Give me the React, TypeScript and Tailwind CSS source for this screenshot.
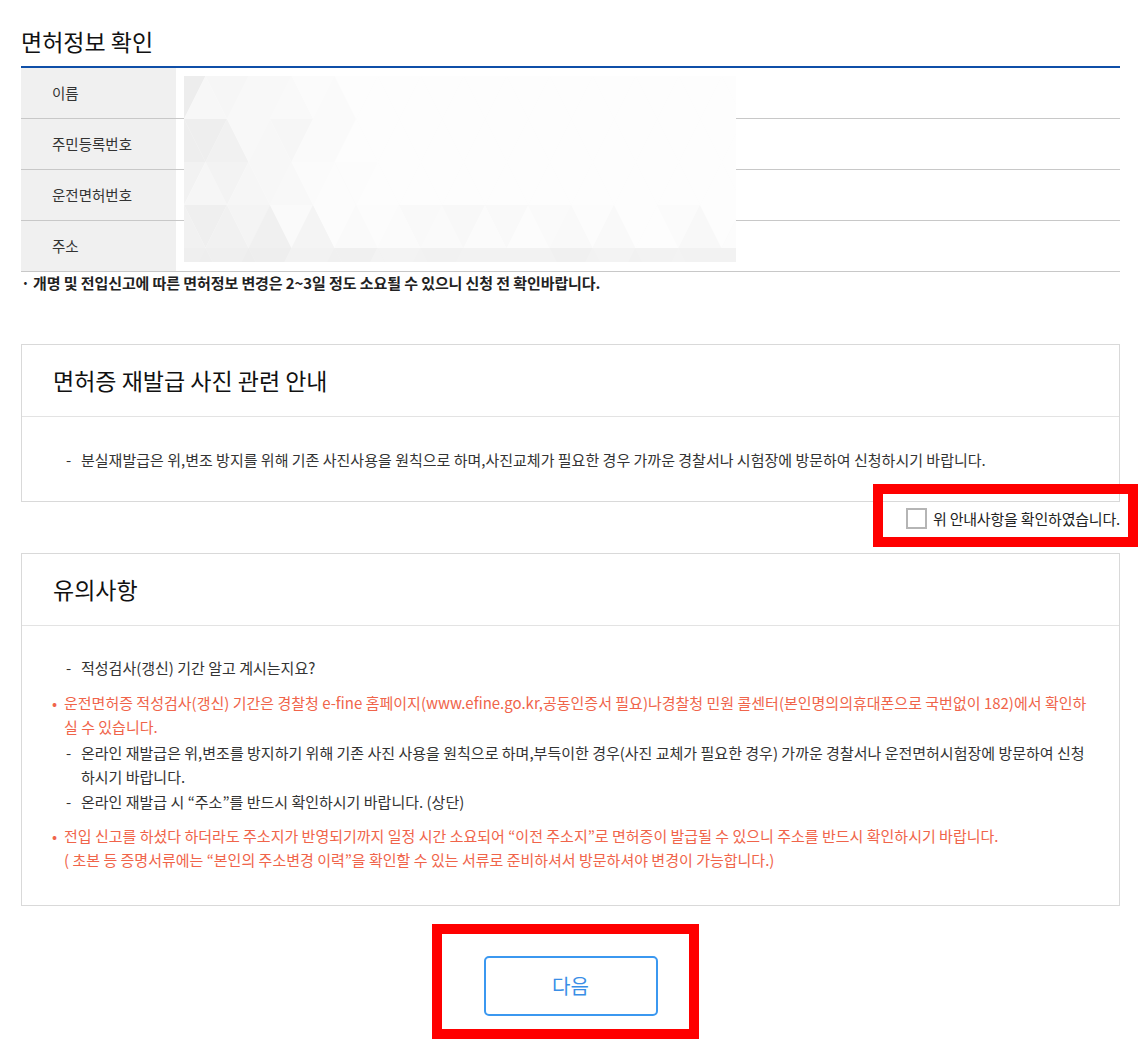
import React from "react";

function BlurredPhoto() {
  const cols = 28;
  const rows = 5;
  const w = 552;
  const h = 186;
  const tw = 43;
  const th = 43;
  const tris: { pts: string; fill: string }[] = [];
  const rand = (i: number, j: number) => {
    const s = Math.sin(i * 12.9898 + j * 78.233) * 43758.5453;
    return s - Math.floor(s);
  };
  for (let r = 0; r < rows; r++) {
    for (let c = -1; c < cols; c++) {
      const x0 = c * (tw / 2);
      const y0 = r * th;
      const up = (c + r) % 2 === 0;
      const pts = up
        ? `${x0},${y0 + th} ${x0 + tw / 2},${y0} ${x0 + tw},${y0 + th}`
        : `${x0},${y0} ${x0 + tw / 2},${y0 + th} ${x0 + tw},${y0}`;
      const leftFactor = Math.max(0, 1 - x0 / 160);
      const bottom = r === 3 ? 0.3 : r >= 4 ? 0.45 : 0;
      const rr = rand(r, c);
      const darkness = Math.min(1, leftFactor * (0.4 + rr * 0.6) + bottom * rr);
      const v = Math.round(253 - darkness * 16);
      tris.push({ pts, fill: `rgb(${v},${v},${v})` });
    }
  }
  return (
    <svg width={w} height={h} viewBox={`0 0 ${w} ${h}`} className="block">
      <rect x="0" y="0" width={w} height={h} fill="#fafafa" />
      {tris.map((t, i) => (
        <polygon key={i} points={t.pts} fill={t.fill} />
      ))}
      <rect x="0" y="172" width={w} height="14" fill="#ececec" opacity="0.6" />
    </svg>
  );
}

const rowsData = ["이름", "주민등록번호", "운전면허번호", "주소"];

export default function App() {
  return (
    <div className="min-h-[1063px] bg-white font-['Noto_Sans_CJK_KR','Noto_Sans',sans-serif] text-[#333]">
      <div className="ml-[21px] w-[1099px] pt-[28px]">
        <h2 className="text-[23px] leading-[26px] text-[#111]">면허정보 확인</h2>
        <div className="mt-[12px] h-[2px] bg-[#0f4fa8]" />

        <div className="relative">
          {rowsData.map((label) => (
            <div key={label} className="flex h-[51px] border-b border-[#c8c8c8]">
              <div className="flex w-[155px] items-center bg-[#f0f0f0] pl-[31px] text-[14.5px] text-[#333]">
                {label}
              </div>
              <div className="flex-1" />
            </div>
          ))}
          <div className="absolute left-[163px] top-[8px]">
            <BlurredPhoto />
          </div>
        </div>

        <p className="mt-[1px] text-[15px] leading-[20px] font-bold text-[#222] tracking-[-0.1px]">
          · 개명 및 전입신고에 따른 면허정보 변경은 2~3일 정도 소요될 수 있으니 신청 전 확인바랍니다.
        </p>

        <section className="mt-[51px] border border-[#d9d9d9]">
          <div className="flex h-[72px] items-center border-b border-[#e3e3e3] pl-[31px]">
            <h3 className="text-[23px] text-[#111]">면허증 재발급 사진 관련 안내</h3>
          </div>
          <div className="pl-[44px] pt-[33px] pb-[31px] text-[15px] leading-[20px] text-[#333]">
            <div className="flex">
              <span className="w-[15px] shrink-0">-</span>
              <span>
                분실재발급은 위,변조 방지를 위해 기존 사진사용을 원칙으로 하며,사진교체가 필요한 경우 가까운 경찰서나 시험장에 방문하여 신청하시기 바랍니다.
              </span>
            </div>
          </div>
        </section>

        <div className="relative flex h-[51px] items-start justify-end pt-[6px]">
          <label className="flex items-center gap-[6px] text-[15px] leading-[20px] text-[#222] tracking-[-0.2px]">
            <span className="block h-[21px] w-[21px] border-2 border-[#b5b5b5] bg-white" />
            <span>위 안내사항을 확인하였습니다.</span>
          </label>
          <div className="pointer-events-none absolute left-[852px] top-[-18px] h-[63px] w-[265px] border-[10px] border-[#ff0000]" />
        </div>

        <section className="border border-[#d9d9d9]">
          <div className="flex h-[72px] items-center border-b border-[#e3e3e3] pl-[31px]">
            <h3 className="text-[23px] text-[#111]">유의사항</h3>
          </div>
          <div className="pl-[30px] pr-[30px] pt-[30px] pb-[33px] text-[15px] leading-[24px]">
            <div className="flex pl-[14px] text-[#333]">
              <span className="w-[15px] shrink-0">-</span>
              <span>적성검사(갱신) 기간 알고 계시는지요?</span>
            </div>
            <div className="mt-[11px] flex text-[#f0644a]">
              <span className="w-[12px] shrink-0">•</span>
              <span>
                운전면허증 적성검사(갱신) 기간은 경찰청 e-fine 홈페이지(www.efine.go.kr,공동인증서 필요)나경찰청 민원 콜센터(본인명의의휴대폰으로 국번없이 182)에서 확인하실 수 있습니다.
              </span>
            </div>
            <div className="mt-[2px] flex pl-[14px] text-[#333]">
              <span className="w-[15px] shrink-0">-</span>
              <span>
                온라인 재발급은 위,변조를 방지하기 위해 기존 사진 사용을 원칙으로 하며,부득이한 경우(사진 교체가 필요한 경우) 가까운 경찰서나 운전면허시험장에 방문하여 신청하시기 바랍니다.
              </span>
            </div>
            <div className="mt-[1px] flex pl-[14px] text-[#333]">
              <span className="w-[15px] shrink-0">-</span>
              <span>온라인 재발급 시 “주소”를 반드시 확인하시기 바랍니다. (상단)</span>
            </div>
            <div className="mt-[10px] flex text-[#f0644a]">
              <span className="w-[12px] shrink-0">•</span>
              <span>
                전입 신고를 하셨다 하더라도 주소지가 반영되기까지 일정 시간 소요되어 “이전 주소지”로 면허증이 발급될 수 있으니 주소를 반드시 확인하시기 바랍니다.
                <br />( 초본 등 증명서류에는 “본인의 주소변경 이력”을 확인할 수 있는 서류로 준비하셔서 방문하셔야 변경이 가능합니다.)
              </span>
            </div>
          </div>
        </section>

        <div className="mt-[50px] flex justify-center">
          <div className="relative">
            <button className="flex h-[60px] w-[174px] items-center justify-center rounded-[5px] border-2 border-[#3b98f0] bg-white text-[20px] text-[#3a8ee6]">
              다음
            </button>
            <div className="pointer-events-none absolute left-[-52px] top-[-32px] h-[115px] w-[267px] border-[10px] border-[#ff0000]" />
          </div>
        </div>
      </div>
    </div>
  );
}
